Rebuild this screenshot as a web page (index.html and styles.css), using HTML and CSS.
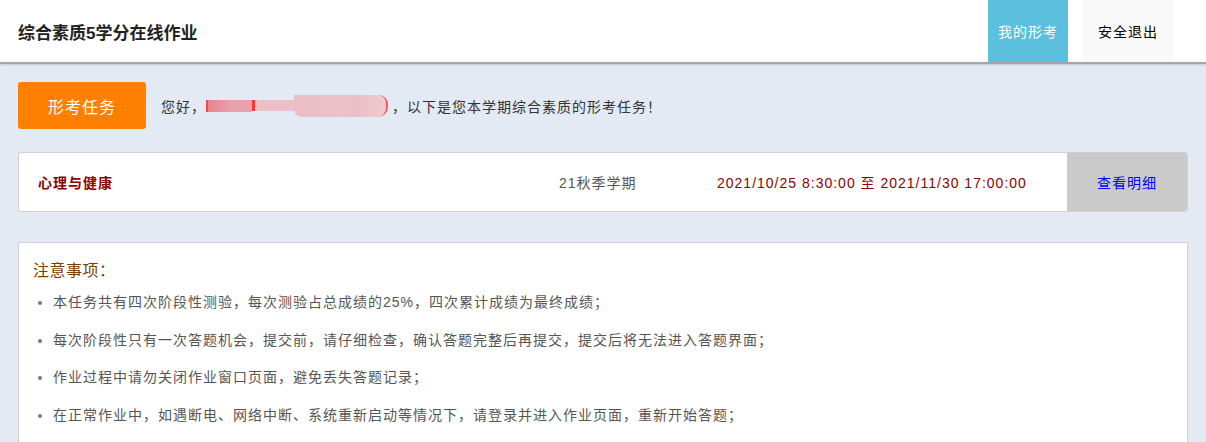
FILE: index.html
```html
<!DOCTYPE html>
<html lang="zh-CN">
<head>
<meta charset="utf-8">
<title>综合素质5学分在线作业</title>
<link rel="stylesheet" href="styles.css">
</head>
<body>
<header class="topbar">
  <div class="brand">综合素质5学分在线作业</div>
  <nav class="nav">
    <a class="nav-item active">我的形考</a>
    <a class="nav-item exit">安全退出</a>
  </nav>
</header>
<main class="main">
  <div class="intro">
    <div class="task-btn">形考任务</div>
    <div class="greet">您好，<span class="redact"><span class="r1"></span><span class="r2"></span><span class="r3"></span></span>，以下是您本学期综合素质的形考任务！</div>
  </div>
  <div class="course">
    <div class="c-name">心理与健康</div>
    <div class="c-term">21秋季学期</div>
    <div class="c-date">2021/10/25 8:30:00 至 2021/11/30 17:00:00</div>
    <a class="c-btn">查看明细</a>
  </div>
  <section class="notice">
    <h3 class="n-title">注意事项：</h3>
    <ul class="n-list">
      <li>本任务共有四次阶段性测验，每次测验占总成绩的25%，四次累计成绩为最终成绩；</li>
      <li>每次阶段性只有一次答题机会，提交前，请仔细检查，确认答题完整后再提交，提交后将无法进入答题界面；</li>
      <li>作业过程中请勿关闭作业窗口页面，避免丢失答题记录；</li>
      <li>在正常作业中，如遇断电、网络中断、系统重新启动等情况下，请登录并进入作业页面，重新开始答题；</li>
    </ul>
  </section>
</main>
</body>
</html>
```

FILE: styles.css
```css
* { box-sizing: border-box; }
html, body { margin: 0; padding: 0; }
body {
  background: #e3eaf4;
  font-family: "Liberation Sans", Arial, "Noto Sans CJK SC", sans-serif;
  font-size: 14px;
  letter-spacing: 1px;
  color: #333;
  height: 442px;
  overflow: hidden;
}
.topbar {
  height: 64px;
  background: #fff;
  border-bottom: 2px solid #a6a6a6;
  box-shadow: 0 1px 2px rgba(0,0,0,0.15);
  display: flex;
  align-items: stretch;
  justify-content: space-between;
}
.brand {
  padding-left: 18px;
  display: flex;
  align-items: center;
  font-size: 17px;
  font-weight: bold;
  letter-spacing: 0;
  color: #222;
}
.nav {
  display: flex;
  gap: 15px;
  padding-right: 33px;
}
.nav-item {
  display: flex;
  align-items: center;
  justify-content: center;
  font-size: 14px;
  color: #000;
  text-decoration: none;
}
.nav-item.active { width: 80px; background: #5bc0de; color: #fff; }
.nav-item.exit { width: 90px; background: #f9f9f9; }
.main { padding: 18px 18px 0; }
.intro { display: flex; align-items: center; }
.task-btn {
  width: 128px;
  height: 47px;
  background: #ff8000;
  color: #fff;
  font-size: 16px;
  border-radius: 3px;
  display: flex;
  align-items: center;
  justify-content: center;
}
.greet {
  margin-left: 15px;
  color: #333;
  display: flex;
  align-items: center;
}
.redact {
  display: inline-flex;
  align-items: center;
  width: 186px;
  height: 24px;
  filter: blur(0.7px);
}
.r1 {
  width: 46px; height: 12px;
  background: linear-gradient(90deg, #e6848e, #eaa2ad 55%, #ec9fab);
  border-left: 2px solid #f44;
}
.r2 {
  width: 42px; height: 11px;
  background: #eebfc8;
  border-left: 3px solid #f33;
}
.r3 {
  width: 94px; height: 22px;
  background: linear-gradient(90deg, #ecbfc8, #e9c0c9 70%, #efc9d0);
  border-radius: 0 9px 10px 8px;
  border-right: 2px solid #f55;
}
.course {
  margin-top: 23px;
  height: 60px;
  background: #fff;
  border: 1px solid #cfcfcf;
  border-radius: 3px;
  display: flex;
  align-items: stretch;
  overflow: hidden;
}
.course > div { display: flex; align-items: center; }
.c-name {
  width: 540px;
  padding-left: 19px;
  font-weight: bold;
  color: #8b0000;
}
.c-term { width: 158px; color: #555; }
.c-date { flex: 1; color: #8b0000; }
.c-btn {
  width: 120px;
  background: #cacaca;
  color: #00f;
  display: flex;
  align-items: center;
  justify-content: center;
}
.notice {
  margin-top: 30px;
  background: #fff;
  border: 1px solid #cfcfcf;
  padding: 17px 14px 20px;
  height: 220px;
}
.n-title {
  margin: 0;
  font-size: 16px;
  font-weight: normal;
  letter-spacing: 0.5px;
  color: #7a3d00;
  line-height: 22px;
}
.n-list {
  margin: 10px 0 0;
  padding-left: 20px;
  color: #555;
}
.n-list li {
  line-height: 20px;
  margin-bottom: 17.5px;
}
.n-list li::marker { color: #777; }
```
